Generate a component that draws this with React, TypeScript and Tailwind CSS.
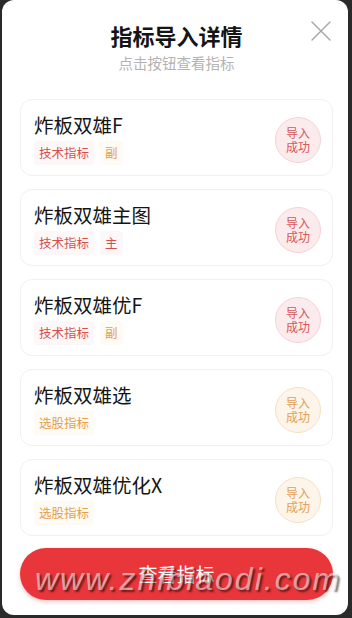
import { X } from 'lucide-react'

type Tone = 'red' | 'orange'

interface Tag {
  label: string
  tone: Tone
}

interface Item {
  name: string
  tags: Tag[]
  tone: Tone
}

const items: Item[] = [
  { name: '炸板双雄F', tone: 'red', tags: [{ label: '技术指标', tone: 'red' }, { label: '副', tone: 'orange' }] },
  { name: '炸板双雄主图', tone: 'red', tags: [{ label: '技术指标', tone: 'red' }, { label: '主', tone: 'red' }] },
  { name: '炸板双雄优F', tone: 'red', tags: [{ label: '技术指标', tone: 'red' }, { label: '副', tone: 'orange' }] },
  { name: '炸板双雄选', tone: 'orange', tags: [{ label: '选股指标', tone: 'orange' }] },
  { name: '炸板双雄优化X', tone: 'orange', tags: [{ label: '选股指标', tone: 'orange' }] },
]

const tagStyle: Record<Tone, string> = {
  red: 'bg-[#fef7f7] text-[#d4504f]',
  orange: 'bg-[#fefaf4] text-[#e59f4c]',
}

const badgeStyle: Record<Tone, string> = {
  red: 'bg-[#fcebec] border-[#f4d3d5] text-[#d4575b]',
  orange: 'bg-[#fdf4ea] border-[#f6e0c6] text-[#e2a056]',
}

function ItemCard({ item }: { item: Item }) {
  return (
    <div className="flex h-[77px] items-center justify-between rounded-[12px] border border-[#f0f0f0] bg-white pl-[13px] pr-[11px]">
      <div className="flex flex-col gap-[4px] pt-[3px]">
        <p className="text-[19.5px] leading-[24px] text-[#151515]">{item.name}</p>
        <div className="flex gap-[6px]">
          {item.tags.map((tag) => (
            <span
              key={tag.label}
              className={`rounded-[3px] px-[5px] text-[12.5px] leading-[24px] ${tagStyle[tag.tone]}`}
            >
              {tag.label}
            </span>
          ))}
        </div>
      </div>
      <div
        className={`mt-[5px] flex h-[46px] w-[46px] flex-col items-center justify-center rounded-full border text-[12px] leading-[14px] ${badgeStyle[item.tone]}`}
      >
        <span>导入</span>
        <span>成功</span>
      </div>
    </div>
  )
}

export default function App() {
  return (
    <div
      className="relative h-[618px] w-[352px] overflow-hidden bg-[#2a2a2a] pb-[3px] pl-[2px] pr-[4px]"
      style={{ fontFamily: '"Noto Sans CJK SC", "Noto Sans", sans-serif' }}
    >
      <div className="flex h-full flex-col rounded-[12px] bg-white pl-[18px] pr-[15px]">
        <div className="relative flex flex-col items-center pt-[20px]">
          <h1 className="text-[22px] font-bold leading-[30px] text-[#151515]">指标导入详情</h1>
          <p className="mt-[3px] text-[14.5px] leading-[20px] text-[#b3b3b3]">点击按钮查看指标</p>
          <button className="absolute right-[-6px] top-[13px] text-[#a8a8a8]">
            <X className="h-[36px] w-[36px]" strokeWidth={1} />
          </button>
        </div>

        <div className="mt-[26px] flex flex-col gap-[13px]">
          {items.map((item) => (
            <ItemCard key={item.name} item={item} />
          ))}
        </div>

        <button className="mt-[12px] h-[52px] w-full rounded-full bg-[#e8363b] text-[19px] text-white shadow-[0_2px_4px_rgba(200,40,40,0.25)]">
          查看指标
        </button>
      </div>

      <span
        className="pointer-events-none absolute left-[35px] top-[563px] whitespace-nowrap text-[32px] italic leading-[32px] tracking-[2px] text-[rgba(255,255,255,0.55)] [text-shadow:2px_2px_2px_rgba(0,0,0,0.55)]"
        style={{ fontFamily: '"Liberation Sans", Arial, sans-serif' }}
      >
        www.zhibiaodi.com
      </span>
    </div>
  )
}
